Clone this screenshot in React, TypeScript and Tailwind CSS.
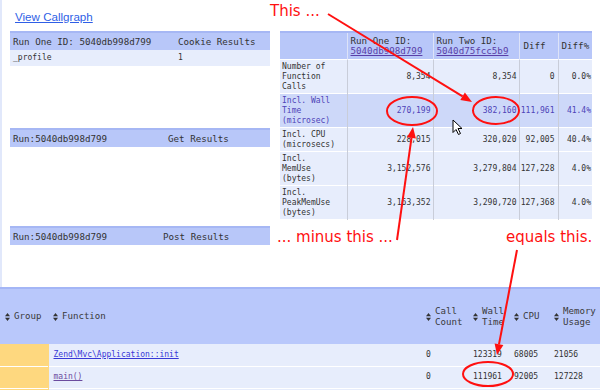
import React from "react";

const SortIcon = () => (
  <svg width="5" height="8" viewBox="0 0 5 8" className="shrink-0">
    <polygon points="2.5,0 5,3.2 0,3.2" fill="#333" />
    <polygon points="2.5,8 5,4.8 0,4.8" fill="#333" />
  </svg>
);

const rows = [
  { label: ["Number of", "Function", "Calls"], a: "8,354", b: "8,354", d: "0", p: "0.0%", hl: false },
  { label: ["Incl. Wall", "Time", "(microsec)"], a: "270,199", b: "382,160", d: "111,961", p: "41.4%", hl: true },
  { label: ["Incl. CPU", "(microsecs)"], a: "228,015", b: "320,020", d: "92,005", p: "40.4%", hl: false },
  { label: ["Incl.", "MemUse", "(bytes)"], a: "3,152,576", b: "3,279,804", d: "127,228", p: "4.0%", hl: false },
  { label: ["Incl.", "PeakMemUse", "(bytes)"], a: "3,163,352", b: "3,290,720", d: "127,368", p: "4.0%", hl: false },
];

export default function App() {
  return (
    <div className="relative w-[600px] h-[390px] overflow-hidden bg-white text-[#333] font-['DejaVu_Sans_Mono',monospace]">
      {/* top section */}
      <div className="flex h-[287px] border-l-2 border-[#e1e8fb] pl-[8px]">
        {/* left column */}
        <div className="w-[260px] pt-[10px]">
          <a className="ml-[5px] block leading-[14px] text-[11.6px] text-[#2f5fe6] underline font-['Liberation_Sans',Arial,sans-serif]">
            View Callgraph
          </a>
          <div className="mt-[7px]">
            <div className="flex items-center h-[19px] border-t-2 border-[#a6b7f4] bg-[#b8c7f9] text-[9.2px] pl-[3px]">
              <span className="w-[165px]">Run One ID: 5040db998d799</span>
              <span>Cookie Results</span>
            </div>
            <div className="flex items-center h-[16px] bg-[#e7edfc] text-[8px] pl-[3px]">
              <span className="w-[165px]">_profile</span>
              <span>1</span>
            </div>
          </div>
          <div className="mt-[62px] flex items-center h-[19px] border-t-2 border-[#a6b7f4] bg-[#b8c7f9] text-[9.2px] pl-[3px]">
            <span className="w-[155px]">Run:5040db998d799</span>
            <span>Get Results</span>
          </div>
          <div className="mt-[79px] flex items-center h-[19px] border-t-2 border-[#a6b7f4] bg-[#b8c7f9] text-[9.2px] pl-[3px]">
            <span className="w-[150px]">Run:5040db998d799</span>
            <span>Post Results</span>
          </div>
        </div>
        {/* right column */}
        <div className="ml-[10px] pt-[31px]">
          <table className="w-[312px] table-fixed border-collapse">
            <colgroup>
              <col className="w-[67px]" />
              <col className="w-[86px]" />
              <col className="w-[86px]" />
              <col className="w-[39px]" />
              <col className="w-[34px]" />
            </colgroup>
            <thead>
              <tr className="bg-[#b8c7f9] border-t-2 border-[#a6b7f4] border-b border-b-white text-[9.2px] leading-[10px] font-normal">
                <th className="border-r border-[#dde3f8] pt-[3px] pb-[3px]"></th>
                <th className="border-r border-[#dde3f8] pt-[3px] pb-[3px] pl-[3px] text-left font-normal">
                  Run One ID:
                  <br />
                  <span className="text-[#5a3fa8] underline">5040db998d799</span>
                </th>
                <th className="border-r border-[#dde3f8] pt-[3px] pb-[3px] pl-[3px] text-left font-normal">
                  Run Two ID:
                  <br />
                  <span className="text-[#5a3fa8] underline">5040d75fcc5b9</span>
                </th>
                <th className="border-r border-[#dde3f8] pl-[4px] text-left font-normal">Diff</th>
                <th className="pl-[3px] text-left font-normal">Diff%</th>
              </tr>
            </thead>
            <tbody className="text-[8px] leading-[10px]">
              {rows.map((r, i) => (
                <tr
                  key={i}
                  className={`border-b border-b-white ${r.hl ? "bg-[#cdd8f9] text-[#4d43b8]" : "bg-[#e7edfc]"}`}
                >
                  <td className="border-r border-[#c9cdd9] py-[1.5px] pl-[2px] align-middle">
                    {r.label.map((l, j) => (
                      <div key={j}>{l}</div>
                    ))}
                  </td>
                  <td className="border-r border-[#c9cdd9] pr-[2px] text-right align-middle">{r.a}</td>
                  <td className="border-r border-[#c9cdd9] pr-[2px] text-right align-middle">{r.b}</td>
                  <td className="border-r border-[#c9cdd9] pr-[3px] text-right align-middle">{r.d}</td>
                  <td className="pr-[1px] text-right align-middle">{r.p}</td>
                </tr>
              ))}
            </tbody>
          </table>
        </div>
      </div>

      {/* bottom table */}
      <table className="w-[600px] table-fixed border-collapse">
        <colgroup>
          <col className="w-[48px]" />
          <col className="w-[373px]" />
          <col className="w-[47px]" />
          <col className="w-[41px]" />
          <col className="w-[40px]" />
          <col className="w-[51px]" />
        </colgroup>
        <thead>
          <tr className="h-[56px] bg-[#b9c8fb] border-t-2 border-[#a4b6f6] text-[9.1px] leading-[10.5px] text-[#3a3a3a]">
            {[
              ["Group"],
              ["Function"],
              ["Call", "Count"],
              ["Wall", "Time"],
              ["CPU"],
              ["Memory", "Usage"],
            ].map((h, i) => (
              <th key={i} className="pl-[5px] font-normal text-left align-middle">
                <div className="flex items-center gap-[4px]">
                  <SortIcon />
                  <div className="whitespace-nowrap">
                    {h.map((t, j) => (
                      <div key={j}>{t}</div>
                    ))}
                  </div>
                </div>
              </th>
            ))}
          </tr>
        </thead>
        <tbody className="text-[8px] leading-[10px]">
          {[
            { f: "Zend\\Mvc\\Application::init", c: "#3838d6", n: ["0", "123319", "68005", "21056"] },
            { f: "main()", c: "#6b4b9e", n: ["0", "111961", "92005", "127228"] },
            { f: "", c: "#3838d6", n: ["", "", "", ""] },
          ].map((r, i) => (
            <tr key={i} className="h-[22px] border-b border-b-white bg-[#e7edfc]">
              <td className="bg-[#fed87f] border-r border-r-[#fed87f]"></td>
              <td className="pl-[5px]">
                <span className="underline" style={{ color: r.c }}>
                  {r.f}
                </span>
              </td>
              {r.n.map((n, j) => (
                <td key={j} className="pl-[5px]">
                  {n}
                </td>
              ))}
            </tr>
          ))}
        </tbody>
      </table>

      {/* annotations overlay */}
      <svg className="absolute left-0 top-0 pointer-events-none" width="600" height="390" viewBox="0 0 600 390">
        <g stroke="#ff1010" strokeWidth="2" fill="none">
          <ellipse cx="412" cy="111" rx="25" ry="14" />
          <ellipse cx="496" cy="110.5" rx="23" ry="13.5" />
          <ellipse cx="488" cy="374" rx="25" ry="12" />
          <line x1="328" y1="14" x2="462.6" y2="96.3" />
          <line x1="397" y1="240" x2="411.5" y2="137.9" />
          <line x1="517" y1="250" x2="499" y2="344.2" />
        </g>
        <g fill="#ff1010">
          <polygon points="472,102 460.3,100.1 464.9,92.4" />
          <polygon points="413,127 415.9,138.5 407,137.3" />
          <polygon points="497,355 494.6,343.4 503.4,345" />
        </g>
        <polygon
          points="453,120 453,132.5 456,129.5 458.5,134.5 460.5,133.5 458,128.5 462,128.5"
          fill="#fff"
          stroke="#000"
          strokeWidth="1"
          strokeLinejoin="round"
        />
      </svg>
      <div className="absolute left-[270px] top-[2px] text-[15px] leading-[18px] text-[#ff1010] font-['DejaVu_Sans',sans-serif] whitespace-nowrap">
        This ...
      </div>
      <div className="absolute left-[277px] top-[228px] text-[15px] leading-[18px] text-[#ff1010] font-['DejaVu_Sans',sans-serif] whitespace-nowrap">
        ... minus this ...
      </div>
      <div className="absolute left-[506px] top-[228px] text-[15px] leading-[18px] text-[#ff1010] font-['DejaVu_Sans',sans-serif] whitespace-nowrap">
        equals this.
      </div>
    </div>
  );
}
